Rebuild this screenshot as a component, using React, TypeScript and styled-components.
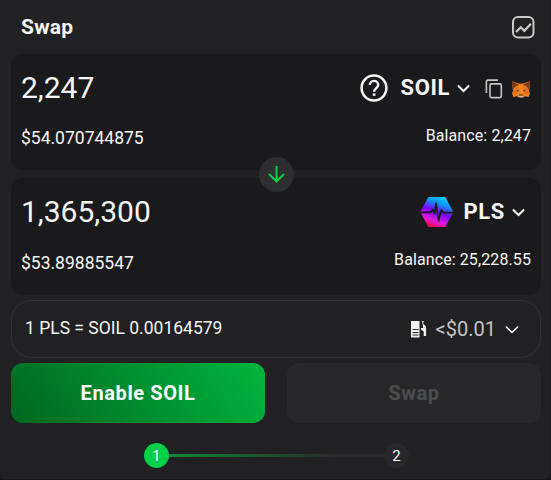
import React from 'react';
import styled, { createGlobalStyle } from 'styled-components';

const GlobalStyle = createGlobalStyle`
  *, *::before, *::after { box-sizing: border-box; }
  body {
    margin: 0;
    background: #18181a;
    color: #f5f5f5;
    font-family: Roboto, 'Liberation Sans', sans-serif;
  }
  button { font: inherit; color: inherit; border: 0; padding: 0; background: none; cursor: pointer; }
  svg { display: block; flex: none; }
`;

const Panel = styled.main`
  width: 550px;
  height: 479px;
  padding: 0 9px 0 11px;
  background: #212123;
  border-radius: 0 0 4px 4px;
`;

const Header = styled.header`
  display: flex;
  align-items: center;
  justify-content: space-between;
  height: 54px;
  padding: 0 6px 0 10px;
`;

const Title = styled.h1`
  margin: 0;
  font-size: 21px;
  font-weight: 700;
  line-height: 24px;
  letter-spacing: 0.2px;
`;

const TokenCard = styled.section<{ $height: number }>`
  height: ${(p) => p.$height}px;
  padding: 14px 10px 0;
  border-radius: 12px;
  background: #1a1a1c;
`;

const Row = styled.div<{ $height: number }>`
  display: flex;
  align-items: center;
  justify-content: space-between;
  height: ${(p) => p.$height}px;
`;

const Amount = styled.span`
  font-size: 30px;
  line-height: 36px;
`;

const Token = styled.button<{ $end?: boolean }>`
  display: flex;
  align-items: center;
  margin-right: ${(p) => (p.$end ? 6 : 0)}px;
`;

const Symbol = styled.span<{ $gap: number }>`
  margin: 0 7px 0 ${(p) => p.$gap}px;
  font-size: 22px;
  font-weight: 700;
  line-height: 28px;
  letter-spacing: 0.6px;
`;

const TokenGroup = styled.div`
  display: flex;
  align-items: center;
`;

const CopyIcon = styled.svg`
  margin: 2px 9px 0 15px;
`;

const FoxIcon = styled.svg`
  margin: 2px 1px 0 0;
`;

const Fiat = styled.span<{ $top: number }>`
  padding-top: ${(p) => p.$top}px;
  font-size: 17.5px;
  line-height: 22px;
`;

const Balance = styled.span`
  font-size: 16px;
  line-height: 22px;
  letter-spacing: 0.1px;
`;

const Divider = styled.div`
  position: relative;
  height: 8px;
`;

const FlipButton = styled.button`
  position: absolute;
  left: 248px;
  top: -13px;
  display: grid;
  place-items: center;
  width: 35px;
  height: 35px;
  border-radius: 50%;
  background: #2d2e30;
  color: #00cf48;
`;

const RateBox = styled.div`
  display: flex;
  align-items: center;
  justify-content: space-between;
  height: 58px;
  margin: 5px 0;
  padding: 0 21px 2px 13px;
  border: 1px solid #323234;
  border-radius: 20px;
  font-size: 17.5px;
`;

const Gas = styled.div`
  display: flex;
  align-items: center;
  padding-top: 2px;
  color: #c4c4c4;
  font-size: 20px;
  gap: 9px;
`;

const Actions = styled.div`
  display: grid;
  grid-template-columns: 1fr 1fr;
  gap: 22px;
`;

const Action = styled.button<{ $primary?: boolean }>`
  && {
    height: 60px;
    border-radius: 12px;
    font-size: 20px;
    font-weight: 700;
    letter-spacing: 0.6px;
    color: ${(p) => (p.$primary ? '#fff' : '#4c4c4d')};
    background: ${(p) => (p.$primary ? 'linear-gradient(55deg, #006621 0%, #00b63d 100%)' : '#28282a')};
  }
`;

const Steps = styled.div`
  display: flex;
  align-items: center;
  width: 265px;
  margin: 20px 0 0 133px;
`;

const Step = styled.span<{ $active?: boolean }>`
  width: 25px;
  height: 25px;
  border-radius: 50%;
  background: ${(p) => (p.$active ? '#00cf48' : '#28282a')};
  font-size: 15px;
  line-height: 26px;
  text-align: center;
`;

const Track = styled.span`
  flex: 1;
  height: 3px;
  background: linear-gradient(90deg, #118a37, #28282a 78%);
`;

const ChartIcon = () => (
  <svg width="24" height="24" viewBox="0 0 24 24" fill="none" stroke="#c9c9c9" strokeWidth="2">
    <rect x="2" y="2" width="20.5" height="20.5" rx="5" />
    <path d="m5 17 4.8-4.7 3.5 3.5 6.7-7" strokeWidth="2.3" />
  </svg>
);

const HelpIcon = () => (
  <svg width="28" height="28" viewBox="0 0 28 28" fill="none" stroke="#f5f5f5" strokeWidth="2.5">
    <circle cx="14" cy="14" r="12.4" />
    <path d="M9.8 11.1c0-2.4 1.8-4.2 4.2-4.2s4.2 1.7 4.2 4c0 2.9-4.1 3.6-4.1 6.9" strokeWidth="2.4" />
    <path d="M12.8 19.3h2.6v2.6h-2.6z" fill="#f5f5f5" stroke="none" />
  </svg>
);

const Chevron = ({ width = 13, stroke = 2 }: { width?: number; stroke?: number }) => (
  <svg width={width} height="9" viewBox={`0 0 ${width} 9`} fill="none" stroke="#f2f2f2" strokeWidth={stroke}>
    <path d={`M.9 1.5 ${width / 2} ${width / 2 + 0.5} ${width - 0.9} 1.5`} />
  </svg>
);

const Copy = () => (
  <CopyIcon width="18" height="20" viewBox="0 0 18 20" fill="none" stroke="#c4c4c4" strokeWidth="1.6">
    <path d="M1.4 14V2.6Q1.4 1.1 2.9 1.1H13" />
    <rect x="5" y="4.9" width="11.3" height="13.7" rx="1.5" />
  </CopyIcon>
);

const Fox = () => (
  <FoxIcon width="18" height="17" viewBox="0 0 18 17">
    <path fill="#e27625" d="M.3.2 6.8 2.6h4.4L17.7.2l.2 5-1 4.6.9 2-1.2 4-3.4-.6-1.8 1.4H6.6l-1.8-1.4-3.4.6-1.2-4 .9-2-1-4.6z" />
    <path fill="#f6851b" d="M6.8 3.4h4.4l-.6 5.4 3 2.6 4.2.4-1.2 4-3.4-.8-2.4-1.8H7.2l-2.4 1.8-3.4.8-1.2-4 4.2-.4 3-2.6z" />
    <path fill="#763d16" d="M.3.2 6.8 4 3.2 5.6 1 8.6.1 5.2zM17.7.2 11.2 4l3.6 1.6L17 8.6l.9-3.4z" />
    <path fill="#cd6116" d="M1 9.6 5 10l1 3-4 .4zM17 9.6l-4 .4-1 3 4 .4z" opacity=".55" />
    <path fill="#4a3a2f" d="m4.8 8.8 2.4.8-.8.9-1.4-.5zM13.2 8.8l-2.4.8.8.9 1.4-.5zM7.3 13.5h3.4l.5 1H6.8z" />
    <path fill="#d7c1b3" d="m6.2 14.6 1.2.4h3.2l1.2-.4-1.3 1.7h-3z" />
  </FoxIcon>
);

const PulseIcon = () => (
  <svg width="34" height="30" viewBox="0 0 34 30">
    <defs>
      <linearGradient id="pulse" x1="23" y1="0" x2="11" y2="31" gradientUnits="userSpaceOnUse">
        <stop offset="0" stopColor="#00d4ff" />
        <stop offset=".25" stopColor="#1688f5" />
        <stop offset=".48" stopColor="#7a00ff" />
        <stop offset=".76" stopColor="#e01adb" />
        <stop offset="1" stopColor="#ff0030" />
      </linearGradient>
    </defs>
    <path fill="url(#pulse)" d="M8.3 0h17L33.3 15l-8 15h-17L.3 15z" />
    <path
      d="M0 15.4h10.6l2-3 1.9 4.4L16 6.2l2.6 17.6 2.7-11 1.8 2.8H34"
      fill="none"
      stroke="#1a1a1c"
      strokeWidth="1.7"
      strokeLinejoin="round"
    />
  </svg>
);

const GasIcon = () => (
  <svg width="16" height="17" viewBox="0 0 16 17">
    <path fill="#f0f0f0" d="M0 0h8.5v16.5H0z" />
    <path stroke="#29292b" strokeWidth="1" d="M1.5 8.5h6M1.5 11.5h6M1.5 14h6" />
    <path fill="#f0f0f0" d="M11 0h1.8l-.7 2.5 3 3.3V15h-2.4v-4.4l-2.8-2.1V7H12V5z" />
  </svg>
);

const DownArrow = () => (
  <svg width="19" height="19" viewBox="0 0 19 19" fill="none" stroke="currentColor" strokeWidth="2">
    <path d="M9.5 1v15.5M2 9l7.5 7.5L17 9" />
  </svg>
);

export default function App() {
  return (
    <>
      <GlobalStyle />
      <Panel>
        <Header>
          <Title>Swap</Title>
          <ChartIcon />
        </Header>
        <TokenCard $height={116}>
          <Row $height={40}>
            <Amount>2,247</Amount>
            <TokenGroup>
              <Token>
                <HelpIcon />
                <Symbol $gap={12.5}>SOIL</Symbol>
                <Chevron />
              </Token>
              <Copy />
              <Fox />
            </TokenGroup>
          </Row>
          <Row $height={56}>
            <Fiat $top={4}>$54.070744875</Fiat>
            <Balance>Balance: 2,247</Balance>
          </Row>
        </TokenCard>
        <Divider>
          <FlipButton aria-label="Switch tokens"><DownArrow /></FlipButton>
        </Divider>
        <TokenCard $height={117}>
          <Row $height={40}>
            <Amount>1,365,300</Amount>
            <Token $end>
              <PulseIcon />
              <Symbol $gap={10}>PLS</Symbol>
              <Chevron />
            </Token>
          </Row>
          <Row $height={56}>
            <Fiat $top={6}>$53.89885547</Fiat>
            <Balance>Balance: 25,228.55</Balance>
          </Row>
        </TokenCard>
        <RateBox>
          <span>1 PLS = SOIL 0.00164579</span>
          <Gas>
            <GasIcon />
            <span>&lt;$0.01</span>
            <Chevron width={14} stroke={1.6} />
          </Gas>
        </RateBox>
        <Actions>
          <Action $primary>Enable SOIL</Action>
          <Action disabled>Swap</Action>
        </Actions>
        <Steps>
          <Step $active>1</Step>
          <Track />
          <Step>2</Step>
        </Steps>
      </Panel>
    </>
  );
}
